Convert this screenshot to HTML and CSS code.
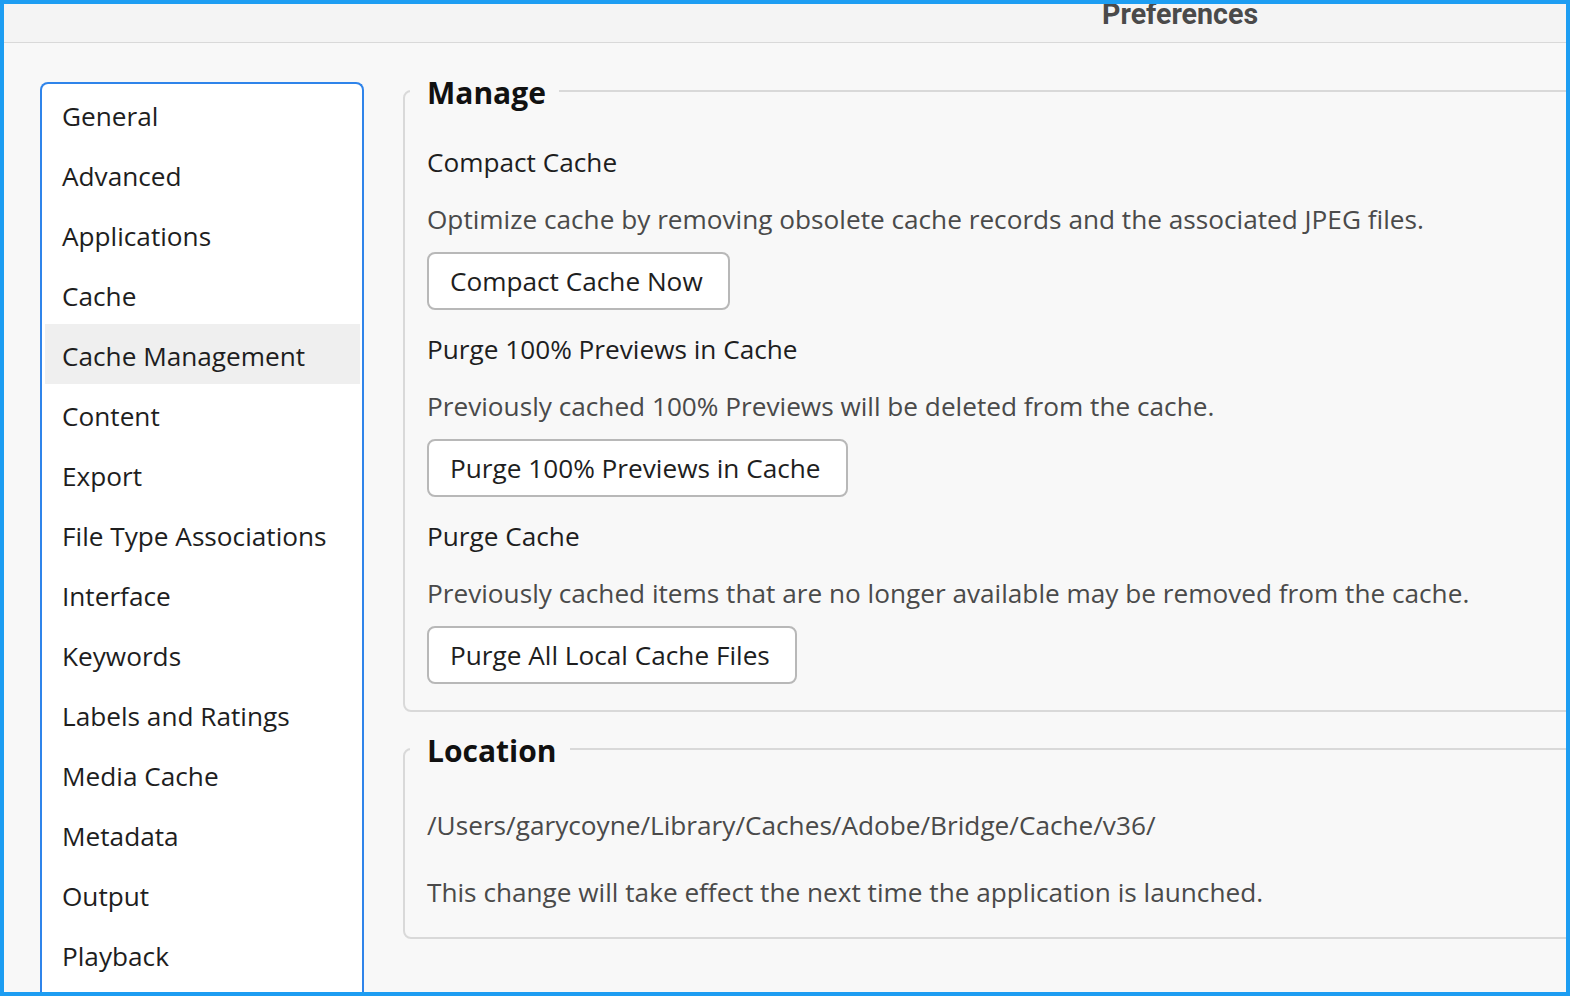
FILE: index.html
```html
<!DOCTYPE html>
<html lang="en">
<head>
<meta charset="utf-8">
<title>Preferences</title>
<link rel="stylesheet" href="styles.css">
</head>
<body>
<div class="window">
  <header class="titlebar">
    <h1 class="title">Preferences</h1>
  </header>
  <div class="main">
    <nav class="sidebar">
      <ul class="nav-list">
        <li class="nav-item">General</li>
        <li class="nav-item">Advanced</li>
        <li class="nav-item">Applications</li>
        <li class="nav-item">Cache</li>
        <li class="nav-item is-selected">Cache Management</li>
        <li class="nav-item">Content</li>
        <li class="nav-item">Export</li>
        <li class="nav-item">File Type Associations</li>
        <li class="nav-item">Interface</li>
        <li class="nav-item">Keywords</li>
        <li class="nav-item">Labels and Ratings</li>
        <li class="nav-item">Media Cache</li>
        <li class="nav-item">Metadata</li>
        <li class="nav-item">Output</li>
        <li class="nav-item">Playback</li>
      </ul>
    </nav>
    <section class="content">
      <fieldset class="group group-manage">
        <legend class="group-legend">Manage</legend>
        <div class="opt-title first">Compact Cache</div>
        <div class="opt-desc">Optimize cache by removing obsolete cache records and the associated JPEG files.</div>
        <button class="btn" type="button">Compact Cache Now</button>
        <div class="opt-title">Purge 100% Previews in Cache</div>
        <div class="opt-desc">Previously cached 100% Previews will be deleted from the cache.</div>
        <button class="btn" type="button">Purge 100% Previews in Cache</button>
        <div class="opt-title">Purge Cache</div>
        <div class="opt-desc">Previously cached items that are no longer available may be removed from the cache.</div>
        <button class="btn" type="button">Purge All Local Cache Files</button>
      </fieldset>
      <fieldset class="group group-location">
        <legend class="group-legend">Location</legend>
        <div class="loc-path">/Users/garycoyne/Library/Caches/Adobe/Bridge/Cache/v36/</div>
        <div class="loc-note">This change will take effect the next time the application is launched.</div>
      </fieldset>
    </section>
  </div>
</div>
</body>
</html>
```

FILE: styles.css
```css
* { box-sizing: border-box; }

html, body {
  margin: 0;
  padding: 0;
}

body {
  font-family: "Open Sans", "Noto Sans", "Liberation Sans", sans-serif;
  background: #f8f8f8;
}

.window {
  width: 1570px;
  height: 996px;
  border: 4px solid #1d9df2;
  background: #f8f8f8;
  overflow: hidden;
  display: flex;
  flex-direction: column;
}

.titlebar {
  flex: none;
  height: 39px;
  background: #f4f4f4;
  border-bottom: 1px solid #d9d9d9;
  overflow: hidden;
  padding-left: 1098px;
}

.title {
  margin: -3px 0 0 0;
  font-family: Roboto, "Liberation Sans", sans-serif;
  font-weight: 700;
  font-size: 28.6px;
  line-height: 27px;
  color: #4a4a4a;
}

.main {
  flex: 1;
  min-height: 0;
  display: flex;
  gap: 39px;
  padding: 28px 0 0 36px;
}

.sidebar {
  flex: none;
  width: 324px;
  margin-top: 11px;
  background: #ffffff;
  border: 2px solid #2f84ea;
  border-bottom: 0;
  border-radius: 8px 8px 0 0;
  padding: 0 2px 0 3px;
}

.nav-list {
  list-style: none;
  margin: 0;
  padding: 0;
}

.nav-item {
  height: 60px;
  display: flex;
  align-items: center;
  padding: 3px 0 0 17px;
  font-size: 26.2px;
  color: #1e1e1e;
}

.nav-item.is-selected {
  background: #efefef;
}

.content {
  flex: 1;
  min-width: 0;
  margin-right: -24px;
  display: flex;
  flex-direction: column;
}

.group {
  margin: 0;
  border: 2px solid #d9d9d9;
  border-radius: 8px;
  padding: 0 0 26px 22px;
  display: flex;
  flex-direction: column;
  align-items: flex-start;
  min-width: 0;
}

.group-location {
  margin-top: 17px;
  padding-bottom: 27px;
}

.group-legend {
  margin-left: -17px;
  padding: 4px 13px 0 17px;
  font-size: 30px;
  line-height: 36px;
  font-weight: 700;
  color: #111111;
}

.opt-title {
  margin-top: 21px;
  font-size: 26.2px;
  line-height: 36px;
  color: #1e1e1e;
}

.opt-title.first {
  margin-top: 33px;
}

.opt-desc {
  margin-top: 21px;
  font-size: 26.2px;
  line-height: 36px;
  color: #4a4a4a;
}

.btn {
  margin-top: 15px;
  height: 58px;
  padding: 0 25px 0 21px;
  background: #ffffff;
  border: 2px solid #b8b8b8;
  border-radius: 8px;
  font-family: inherit;
  font-size: 26.2px;
  color: #1e1e1e;
  cursor: pointer;
}

.loc-path {
  margin-top: 38px;
  font-size: 26.2px;
  line-height: 36px;
  color: #4a4a4a;
}

.loc-note {
  margin-top: 31px;
  font-size: 26.2px;
  line-height: 36px;
  color: #4a4a4a;
}
```
